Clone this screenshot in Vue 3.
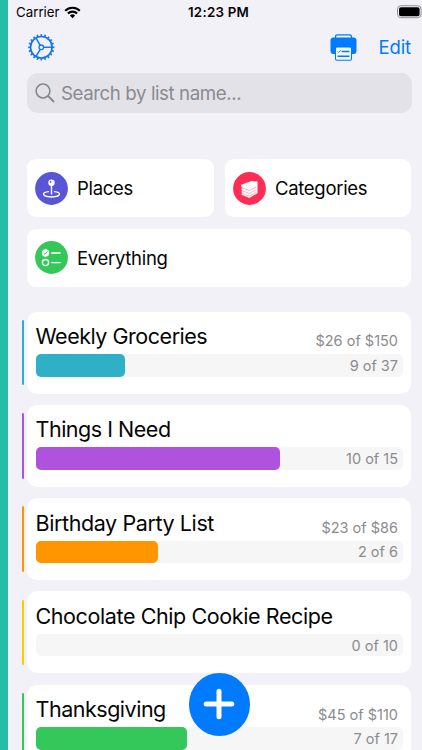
<script setup>
const lists = [
  { name: 'Weekly Groceries', color: '#30b0c7', done: 9, total: 37, price: '$26 of $150', cls: 'weekly' },
  { name: 'Things I Need', color: '#af52de', done: 10, total: 15, cls: 'things' },
  { name: 'Birthday Party List', color: '#ff9500', done: 2, total: 6, price: '$23 of $86', cls: 'birthday' },
  { name: 'Chocolate Chip Cookie Recipe', color: '#ffcc00', done: 0, total: 10, cls: 'cookie' },
  { name: 'Thanksgiving', color: '#34c759', done: 7, total: 17, price: '$45 of $110', cls: 'thanks' },
]
const teeth = Array.from({ length: 20 }, (_, i) => i * 18)
</script>

<template>
  <div class="screen">
    <header class="status">
      <span class="carrier">Carrier</span>
      <svg class="wifi" width="17" height="13" viewBox="0 0 17 13">
        <path d="M1.2 4.8a10.3 10.3 0 0 1 14.6 0M3.9 7.5a6.5 6.5 0 0 1 9.2 0" fill="none" stroke="#000" stroke-width="2.2" />
        <path d="M5.9 9.6a3.7 3.7 0 0 1 5.2 0L8.5 12.2z" fill="#000" />
      </svg>
      <span class="time">12:23 PM</span>
      <svg class="battery" width="25" height="14" viewBox="0 0 25 14">
        <rect x=".5" y=".7" width="23.6" height="12" rx="3.4" fill="none" stroke="#929197" />
        <rect x="2" y="2.2" width="20.6" height="9" rx="2" fill="#000" />
      </svg>
    </header>

    <nav class="toolbar">
      <svg class="gear" width="28" height="28" viewBox="0 0 28 28" fill="none" stroke="#1479ee">
        <g transform="translate(.3 .3)">
          <circle cx="14" cy="14" r="10.8" stroke-width="1.7" />
          <path v-for="a in teeth" :key="a" d="M14 3.2V.9" stroke-width="1.7" :transform="`rotate(${a} 14 14)`" />
          <circle cx="14" cy="14" r="2.3" stroke-width="1.3" />
          <path d="M16.3 14h8.5M12.9 12 8.6 4.6M12.9 16 8.6 23.4" stroke-width="1.5" />
        </g>
      </svg>
      <svg class="printer" width="27" height="27" viewBox="0 0 27 27">
        <path d="M5.5 4V2.7Q5.5 .8 7.5 .8H19.5Q21.5 .8 21.5 2.7V4" fill="none" stroke="#007aff" stroke-width="1.3" />
        <rect x=".5" y="3.5" width="26" height="16.5" rx="3" fill="#007aff" />
        <rect x="5.5" y="13" width="16" height="13.2" rx="1.5" fill="#f4f6fd" stroke="#007aff" stroke-width="1.1" />
        <path d="m7.5 17.7 1 .9 2.3-2.3" fill="none" stroke="#007aff" stroke-width=".9" />
        <path d="M11.7 17.5h7.8M7.5 22.3h12" fill="none" stroke="#007aff" stroke-width="1.4" />
      </svg>
      <span class="edit">Edit</span>
    </nav>

    <div class="search">
      <svg width="20" height="20" viewBox="0 0 20 20" fill="none" stroke="#86858b" stroke-linecap="round">
        <circle cx="8" cy="8" r="6.9" stroke-width="1.5" />
        <path d="m13.2 13.2 5.3 5.3" stroke-width="1.8" />
      </svg>
      <span>Search by list name...</span>
    </div>

    <section class="shortcuts">
      <div class="tile">
        <svg class="badge" width="33" height="33" viewBox="0 0 33 33">
          <circle cx="16.5" cy="16.5" r="16.4" fill="#5856d6" />
          <path d="M13.5 19.600c-3 .3-5 1.200-5 2.500 0 1.600 3.500 2.900 8 2.900s8-1.300 8-2.900c0-1.300-2-2.200-5-2.500" fill="none" stroke="#fff" stroke-width="1.300" stroke-linecap="round" />
          <path d="M16.5 11v11" stroke="#fff" stroke-width="1.4" stroke-linecap="round" />
          <circle cx="16.5" cy="10.7" r="3.2" fill="#fff" />
          <circle cx="15.6" cy="9.9" r=".9" fill="#5856d6" />
        </svg>
        <span class="places">Places</span>
      </div>
      <div class="tile">
        <svg class="badge" width="33" height="33" viewBox="0 0 33 33">
          <circle cx="16.5" cy="16.5" r="16.4" fill="#ff2d55" />
          <path d="M8.2 12.8 18.5 9l6 .5v11.700L16.300 26l-8.100-3.600 1-1.400-1-.9 1-1.700-1-.9 1-1.700-1-.9z" fill="#fff" />
          <path d="m8.6 15.700 7.700 2.900 7-3.700M8.600 18.500l7.700 2.900 7-3.700M8.600 21.200l7.700 2.900 7-3.700" fill="none" stroke="#ff5f7d" stroke-width=".5" />
        </svg>
        <span class="categories">Categories</span>
      </div>
      <div class="tile wide">
        <svg class="badge" width="33" height="33" viewBox="0 0 33 33">
          <circle cx="16.5" cy="16.5" r="16.4" fill="#34c759" />
          <circle cx="10.5" cy="12" r="3.7" fill="#fff" />
          <path d="m8.7 12.1 1.3 1.3 2.4-2.9" fill="none" stroke="#34c759" stroke-width="1" />
          <circle cx="10.5" cy="21.6" r="3.1" fill="none" stroke="#fff" stroke-width="1.3" />
          <path d="M16.7 12h8.5M16.7 21.6h8.5" stroke="#fff" stroke-width="1.3" stroke-linecap="round" />
        </svg>
        <span class="everything">Everything</span>
      </div>
    </section>

    <main class="lists">
      <article v-for="l in lists" :key="l.name" class="row">
        <i class="stripe" :style="{ background: l.color }"></i>
        <div class="card">
          <div class="head">
            <h2 :class="l.cls">{{ l.name }}</h2>
            <span v-if="l.price" class="amount">{{ l.price }}</span>
          </div>
          <div class="track">
            <div class="fill" :style="{ width: (l.done / l.total) * 100 + '%', background: l.color }"></div>
            <span class="amount">{{ l.done }} of {{ l.total }}</span>
          </div>
        </div>
      </article>
    </main>

    <button class="add" aria-label="Add">
      <svg width="32" height="32" viewBox="0 0 32 32">
        <path d="M16 3.2v25.6M3.2 16h25.6" stroke="#fff" stroke-width="5" stroke-linecap="round" />
      </svg>
    </button>
  </div>
</template>

<style>
body { margin: 0; overflow: hidden; }
</style>

<style scoped>
* { box-sizing: border-box; }
.screen {
  position: relative;
  width: 422px;
  height: 750px;
  overflow: hidden;
  background: #f2f1f8;
  border-left: 8px solid #27bca8;
  font-family: Inter, "Liberation Sans", sans-serif;
  color: #050505;
}
.status {
  display: grid;
  grid-template-columns: 48px 124px 1fr 25px;
  height: 24px;
  align-items: center;
  padding-left: 8px;
}
.carrier { font-size: 13.3px; white-space: nowrap; }
.time { font-size: 13.3px; font-weight: 600; letter-spacing: .25px; white-space: nowrap; }
.battery { margin-top: -1px; }
.toolbar { display: flex; height: 49px; align-items: center; padding: 0 11px 3px 19px; }
.printer { margin-left: auto; }
.edit { margin-left: 21px; color: #007aff; font-size: 18.5px; letter-spacing: -.1px; }
.search {
  display: flex;
  align-items: center;
  gap: 6px;
  width: 385px;
  height: 40px;
  margin-left: 19px;
  padding-left: 8px;
  border-radius: 11px;
  background: #e3e2e8;
  color: #8b8a90;
  font-size: 18.7px;
  letter-spacing: -.42px;
}
.shortcuts {
  display: grid;
  grid-template-columns: 186.5px 186px;
  grid-template-rows: 58.3px 58.3px;
  gap: 11.5px;
  margin: 46px 11px 0 19px;
}
.tile {
  display: flex;
  align-items: center;
  gap: 9px;
  padding-left: 8px;
  border-radius: 9px;
  background: #fff;
  font-size: 18.5px;
  letter-spacing: -.3px;
}
.wide { grid-column: span 2; }
.lists { display: flex; flex-direction: column; gap: 11.3px; margin: 24.5px 11px 0 14px; }
.row { display: flex; align-items: center; gap: 3px; height: 82px; flex: none; }
.stripe { width: 2px; height: 65.5px; border-radius: 1px; }
.card { flex: 1; height: 82px; padding: 8px 8.5px; border-radius: 10px; background: #fff; }
.head { display: flex; justify-content: space-between; height: 34.5px; padding-right: 4.5px; }
h2 { margin: 1.6px 0 0; font-size: 21.5px; line-height: 30px; font-weight: 400; letter-spacing: -.4px; white-space: nowrap; }
.weekly, .things, .thanks { letter-spacing: -.48px; }
.amount { color: #8c8b90; font-size: 14.5px; line-height: 22.5px; white-space: nowrap; }
.head .amount { margin-top: 10.8px; }
.track { display: flex; align-items: center; justify-content: space-between; height: 22.5px; border-radius: 5px; background: #f6f6f6; }
.fill { height: 22.5px; border-radius: 5px; }
.track .amount { margin: 1.4px 4.5px 0 -80px; }
.add {
  position: absolute;
  left: 180.6px;
  top: 672.5px;
  display: grid;
  place-items: center;
  width: 61.6px;
  height: 63px;
  padding: 0;
  border: 0;
  border-radius: 50%;
  background: #007aff;
}
</style>
